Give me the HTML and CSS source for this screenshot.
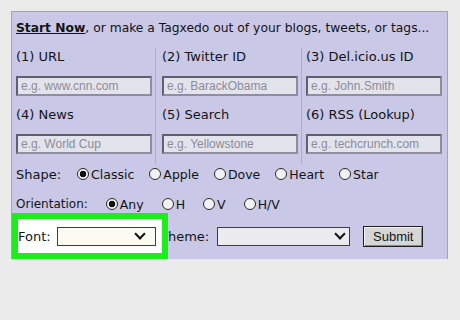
FILE: index.html
```html
<!DOCTYPE html>
<html lang="en">

<head>
    <meta charset="UTF-8">
    <title>Tagxedo - Start Now</title>
    <link rel="stylesheet" href="styles.css">
</head>

<body>
    <div class="panel">
        <p class="intro"><span class="start">Start Now</span>, or make a Tagxedo out of your blogs, tweets, or tags...</p>

        <div class="sources">
            <div class="source">
                <label>(1) URL</label>
                <div class="field">e.g. www.cnn.com</div>
            </div>
            <div class="source">
                <label>(2) Twitter ID</label>
                <div class="field">e.g. BarackObama</div>
            </div>
            <div class="source">
                <label>(3) Del.icio.us ID</label>
                <div class="field">e.g. John.Smith</div>
            </div>
            <div class="source">
                <label>(4) News</label>
                <div class="field">e.g. World Cup</div>
            </div>
            <div class="source">
                <label>(5) Search</label>
                <div class="field">e.g. Yellowstone</div>
            </div>
            <div class="source">
                <label>(6) RSS (Lookup)</label>
                <div class="field">e.g. techcrunch.com</div>
            </div>
        </div>

        <div class="option-row shape-row">
            <span class="row-label">Shape:</span>
            <span class="radio checked">Classic</span>
            <span class="radio">Apple</span>
            <span class="radio">Dove</span>
            <span class="radio">Heart</span>
            <span class="radio">Star</span>
        </div>

        <div class="option-row orient-row">
            <span class="row-label">Orientation:</span>
            <span class="radio checked">Any</span>
            <span class="radio">H</span>
            <span class="radio">V</span>
            <span class="radio">H/V</span>
        </div>

        <div class="submit-row">
            <div class="font-box">
                <span>Font:</span>
                <div class="select font-select"><span class="arrow"></span></div>
            </div>
            <span class="theme-label">Theme:</span>
            <div class="select theme-select"><span class="arrow"></span></div>
            <div class="button">Submit</div>
        </div>
    </div>
</body>

</html>
```

FILE: styles.css
```css
body {
    margin: 0;
    padding: 0;
    background-color: #ebebeb;
    font-family: "DejaVu Sans", Verdana, sans-serif;
    font-size: 13px;
    color: #141414;
}

.panel {
    margin: 11px 0 0 11px;
    width: 435px;
    height: 247px;
    background-color: #c9c8e7;
    border: 1px solid #a2a2b4;
    border-bottom: none;
}

.intro {
    margin: 0;
    padding: 7px 0 0 4px;
    height: 29px;
    line-height: 18px;
    font-size: 12.3px;
    white-space: nowrap;
}

.start {
    font-weight: bold;
    text-decoration: underline;
}

.sources {
    display: grid;
    grid-template-columns: 144px 146px 145px;
    grid-auto-rows: 58px;
}

.source {
    padding-left: 4px;
    border-right: 1px solid #aeadcb;
}

.source:nth-child(3n+2) {
    padding-left: 6px;
}

.source:nth-child(3n) {
    border-right: none;
    padding-left: 4px;
}

.source label {
    display: block;
    height: 18px;
    line-height: 18px;
    margin-bottom: 10px;
}

.field {
    width: 129px;
    height: 16px;
    border: 2px solid #5f5f72;
    border-right-color: #8e8ea0;
    border-bottom-color: #8e8ea0;
    background-color: #e3e3ec;
    color: #8b8b98;
    font-family: Arial, "Liberation Sans", sans-serif;
    font-size: 12px;
    line-height: 16px;
    padding-left: 3px;
}

.option-row {
    display: flex;
    align-items: center;
    padding-left: 4px;
    height: 20px;
}

.orient-row {
    margin-top: 10px;
}

.orient-row .row-label {
    font-size: 12px;
    margin-right: 18px;
}

.row-label {
    margin-right: 16px;
}

.radio {
    display: flex;
    align-items: center;
    margin-right: 15px;
    font-size: 12.5px;
}

.orient-row .radio {
    margin-right: 18px;
}

.radio::before {
    content: "";
    width: 10px;
    height: 10px;
    border: 1px solid #2a2a2a;
    border-radius: 50%;
    background-color: #f2f2f2;
    margin-right: 2px;
}

.radio.checked::before {
    background: radial-gradient(circle, #111 0 3px, #f2f2f2 3.6px);
}

.submit-row {
    display: flex;
    align-items: center;
    margin-top: -1px;
    height: 46px;
}

.font-box {
    position: relative;
    z-index: 1;
    display: flex;
    align-items: center;
    background-color: #fff;
    border: 6px solid #1aef1a;
    width: 144px;
    height: 34px;
}

.font-box span {
    margin-right: 6px;
}

.select {
    position: relative;
    height: 17px;
    border: 1px solid #3c3c48;
    background-color: #fbfbf2;
    box-sizing: content-box;
}

.font-select {
    width: 97px;
}

.theme-label {
    margin-left: -8px;
    margin-right: 8px;
}

.theme-select {
    width: 131px;
    background-color: #ececef;
}

.arrow {
    position: absolute;
    right: 5px;
    top: 2px;
    width: 6px;
    height: 6px;
    border-right: 2px solid #111;
    border-bottom: 2px solid #111;
    transform: rotate(45deg);
}

.button {
    margin-left: 13px;
    width: 58px;
    height: 19px;
    border: 1px solid #1e1e1e;
    background-color: #d6d6d6;
    box-shadow: inset 1px 1px 0 #f4f4f4, inset -1px -1px 0 #8a8a8a;
    font-family: Arial, "Liberation Sans", sans-serif;
    font-size: 13px;
    text-align: center;
    line-height: 19px;
}
```
